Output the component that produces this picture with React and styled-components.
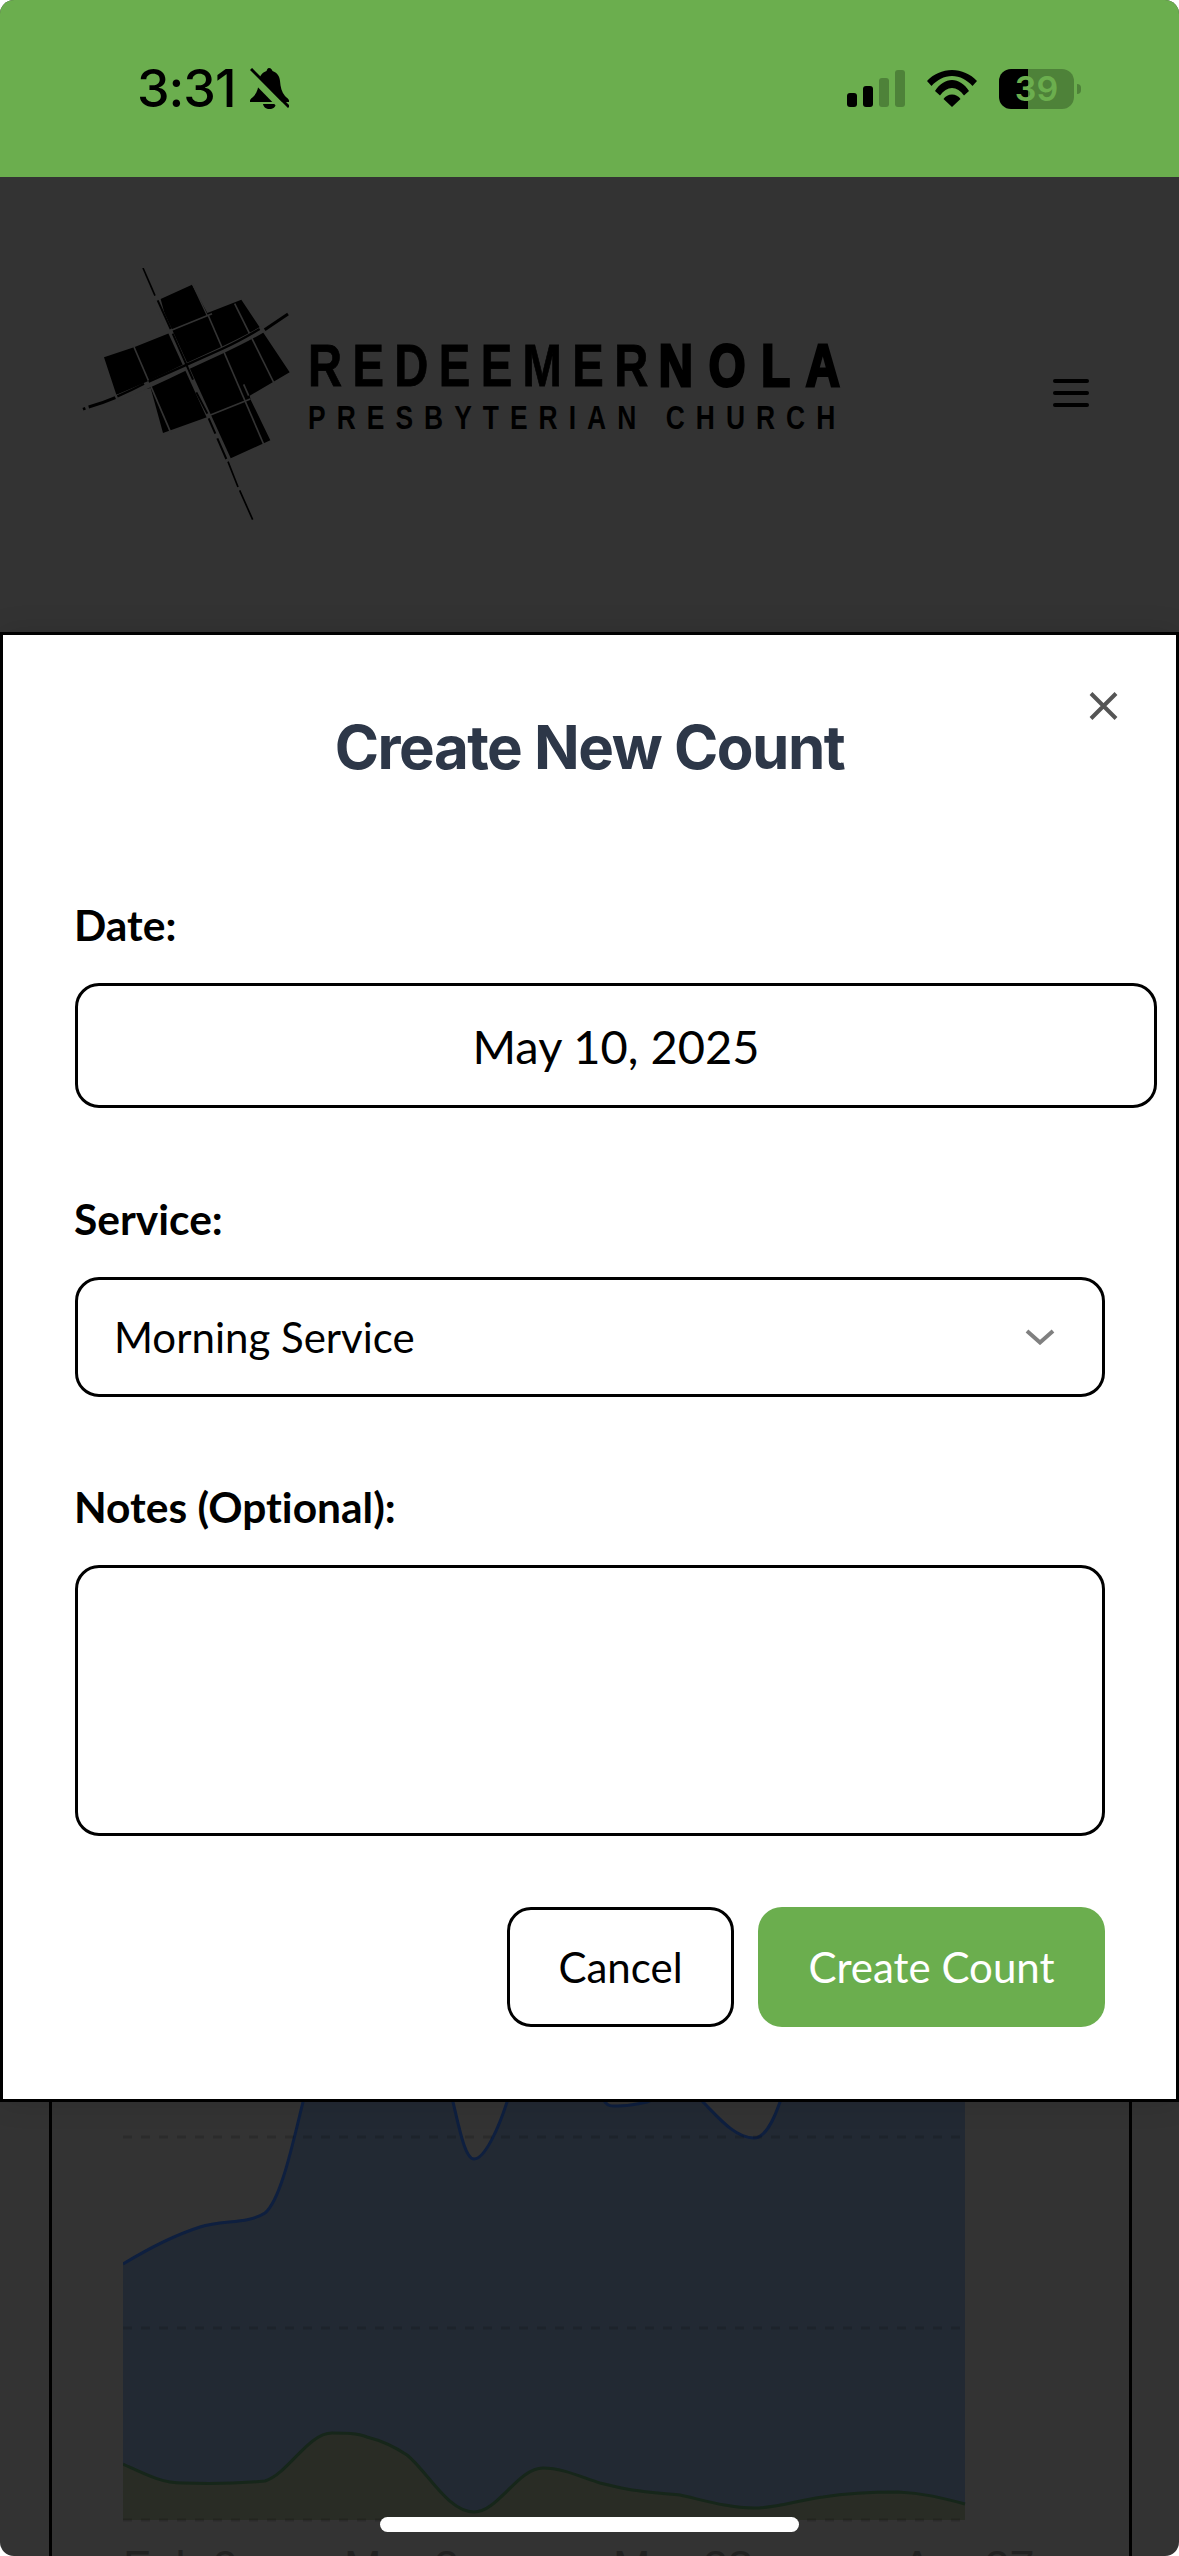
import React from "react";
import styled, { createGlobalStyle } from "styled-components";

const GREEN = "#6bae4e";
const DIM = "#4e8239";
const SHADE = "#333333";

const GlobalStyle = createGlobalStyle`
  html, body {
    margin: 0;
    padding: 0;
    background: #fff;
  }
  * {
    box-sizing: border-box;
  }
`;

const BellIcon = () => (
  <svg width="39" height="42" viewBox="0 0 39 42">
    <path
      d="M19 0c2 0 3 1.500 3.500 3C27 4.500 29.500 8 30 13c.5 6 1.500 11 5 15 1.500 1.500 4 3 4 4.500V34H0v-1.500C0 31 2.500 29.500 4 28c3.500-4 4.500-9 5-15 .5-5 3-8.500 7.500-10C17 1.500 17.500 0 19 0z"
      fill="#000"
    />
    <path d="M13 36h13c-.5 3-3 5-6.500 5S13.500 39 13 36z" fill="#000" />
    <path d="M-2 4 L36 43" stroke={GREEN} strokeWidth="7" />
    <path d="M1 1 L39 39" stroke="#000" strokeWidth="3" />
  </svg>
);

const WifiIcon = () => (
  <svg width="50" height="37" viewBox="0 0 50 37">
    <path d="M0 11C6.500 4 15.500 0 25 0s18.500 4 25 11l-4.500 5C40 10 33 6 25 6S10 10 4.500 16z" fill="#000" />
    <path d="M8 21c4.500-7 10.500-11 17-11s12.500 4 17 11l-5 4.500C33.500 20.500 29.500 18 25 18s-8.500 2.500-12 7.500z" fill="#000" />
    <path d="M16.500 29c2-3 5-4.500 8.500-4.500s6.500 1.500 8.500 4.500L25 37z" fill="#000" />
  </svg>
);

const LogoMark = () => (
  <MarkSvg viewBox="22 25 624 756">
    <path
      d="M258 118 L352 75 L398 160 L500 120 L645 338 L525 408 L528 420 L587 542 L465 597 L405 470 L265 520 L228 385 L125 405 L88 293 L180 262 L285 220 Z"
      fill="#000"
    />
    <g stroke={SHADE} fill="none" strokeWidth="5">
      <path d="M353 72 L398 168" strokeWidth="4" />
      <path d="M400 166 L568 556" />
      <path d="M178 262 L288 518" />
      <path d="M480 132 L598 370" />
      <path d="M507 374 L522 408" />
      <path d="M290 212 L412 162" />
      <path d="M398 470 L527 418" />
      <path d="M244 122 L462 600" strokeWidth="15" />
      <path d="M120 418 Q 215 380 333 322 L445 270 Q 520 235 572 204" strokeWidth="20" />
    </g>
    <g stroke="#000" fill="none">
      <path d="M205 25 L241 108" strokeWidth="5" />
      <path d="M249 122 L288 208" strokeWidth="6" />
      <path d="M294 222 L355 360 M365 398 L398 462 M402 476 L422 522 M428 536 L455 598" strokeWidth="6" />
      <path d="M460 606 L490 682 M495 692 L534 780" strokeWidth="5" />
      <path d="M25 449 L32 446" strokeWidth="8" />
      <path d="M42 442 Q 85 430 122 414" strokeWidth="9" />
      <path d="M128 410 Q 170 392 208 372 M222 366 L330 318 L442 268 Q 495 244 555 208" strokeWidth="7" />
      <path d="M570 210 L640 163" strokeWidth="9" />
    </g>
  </MarkSvg>
);

const AttendanceChart = () => (
  <ChartSvg viewBox="0 0 1000 454">
    <path
      d="M0 162 C28 145 52 133 77 125 C100 118 125 122 142 111 C158 98 170 40 180 0 L190 -60 L318 -60 L330 0 C336 25 342 57 351 57 C362 57 376 25 384 0 L395 -40 L470 -40 L482 0 C486 5 490 4 494 4 C504 4 515 2 524 0 L570 -20 L580 0 C595 15 612 36 631 36 C642 36 650 20 657 0 L670 -50 L842 -50 L842 418 L0 418 Z"
      fill="#222933"
    />
    <path
      d="M0 162 C28 145 52 133 77 125 C100 118 125 122 142 111 C158 98 170 40 180 0 L190 -60 M318 -60 L330 0 C336 25 342 57 351 57 C362 57 376 25 384 0 L395 -40 M470 -40 L482 0 C486 5 490 4 494 4 C504 4 515 2 524 0 L570 -20 L580 0 C595 15 612 36 631 36 C642 36 650 20 657 0 L670 -50"
      fill="none"
      stroke="#0e1f3f"
      strokeWidth="3"
    />
    <path
      d="M0 362 C22 372 38 381 60 381 C88 382 120 381 142 379 C165 372 185 331 209 331 C222 331 234 331 244 335 C260 339 272 345 284 353 C305 370 325 410 351 410 C375 410 395 366 420 366 C440 366 460 376 477 381 L494 385 C515 390 535 391 557 393 C580 398 605 406 631 406 C655 406 675 398 700 395 C725 391 750 390 775 390 C800 391 820 396 842 402 L842 418 L0 418 Z"
      fill="#292c25"
    />
    <path
      d="M0 362 C22 372 38 381 60 381 C88 382 120 381 142 379 C165 372 185 331 209 331 C222 331 234 331 244 335 C260 339 272 345 284 353 C305 370 325 410 351 410 C375 410 395 366 420 366 C440 366 460 376 477 381 L494 385 C515 390 535 391 557 393 C580 398 605 406 631 406 C655 406 675 398 700 395 C725 391 750 390 775 390 C800 391 820 396 842 402"
      fill="none"
      stroke="#16261a"
      strokeWidth="3"
    />
    <g stroke="rgba(0,0,0,0.14)" strokeWidth="3" strokeDasharray="9 9">
      <path d="M0 35 H842" />
      <path d="M0 226 H842" />
      <path d="M0 418 H842" />
    </g>
    <AxisText x="0" y="480">Feb 9</AxisText>
    <AxisText x="221" y="480">Mar 2</AxisText>
    <AxisText x="490" y="480">Mar 23</AxisText>
    <AxisText x="779" y="480">Apr 27</AxisText>
  </ChartSvg>
);

export default function App() {
  return (
    <>
      <GlobalStyle />
      <Page>
        <StatusBar>
          <TimeGroup>
            <Clock>3:31</Clock>
            <BellIcon />
          </TimeGroup>
          <StatusIcons>
            <SignalBars>
              <Bar $h={14} />
              <Bar $h={21} />
              <Bar $h={29} $dim />
              <Bar $h={37} $dim />
            </SignalBars>
            <WifiIcon />
            <Battery>39</Battery>
          </StatusIcons>
        </StatusBar>

        <Header>
          <Logo>
            <LogoMark />
            <LogoText>
              <LogoName>
                REDEEMER<strong>NOLA</strong>
              </LogoName>
              <LogoSub>PRESBYTERIAN CHURCH</LogoSub>
            </LogoText>
          </Logo>
          <Burger>
            <span />
            <span />
            <span />
          </Burger>
        </Header>

        <Modal>
          <CloseButton aria-label="Close">
            <svg width="29" height="28" viewBox="0 0 29 28">
              <path d="M2 1.500 L27 26.500 M27 1.500 L2 26.500" stroke="#555" strokeWidth="4" />
            </svg>
          </CloseButton>
          <Title>Create New Count</Title>
          <Form>
            <Label>Date:</Label>
            <DateField>May 10, 2025</DateField>
            <Label $gap={87}>Service:</Label>
            <SelectField>
              Morning Service
              <svg width="30" height="16" viewBox="0 0 30 16">
                <path d="M2 2 L15 13.500 L28 2" fill="none" stroke="#808080" strokeWidth="4" />
              </svg>
            </SelectField>
            <Label $gap={86}>Notes (Optional):</Label>
            <NotesField />
            <Actions>
              <CancelButton>Cancel</CancelButton>
              <SubmitButton>Create Count</SubmitButton>
            </Actions>
          </Form>
        </Modal>

        <ChartCard>
          <AttendanceChart />
        </ChartCard>

        <HomeIndicator />
      </Page>
    </>
  );
}

const Page = styled.div`
  position: relative;
  width: 1179px;
  height: 2556px;
  overflow: hidden;
  background: ${SHADE};
  border-radius: 14px;
  display: flex;
  flex-direction: column;
`;

const StatusBar = styled.div`
  height: 177px;
  flex: none;
  background: ${GREEN};
  display: flex;
  align-items: center;
  justify-content: space-between;
  padding: 0 98px 0 137px;
`;

const TimeGroup = styled.div`
  display: flex;
  align-items: center;
  gap: 14px;
`;

const Clock = styled.div`
  font-family: Inter, "Liberation Sans", sans-serif;
  font-size: 52px;
  font-weight: 500;
  line-height: 52px;
  letter-spacing: -1px;
  color: #000;
`;

const StatusIcons = styled.div`
  display: flex;
  align-items: center;
  gap: 22px;
`;

const SignalBars = styled.div`
  display: flex;
  align-items: flex-end;
  gap: 6px;
  height: 37px;
`;

const Bar = styled.div`
  width: 10px;
  height: ${(p) => p.$h}px;
  border-radius: 3px;
  background: ${(p) => (p.$dim ? DIM : "#000")};
`;

const Battery = styled.div`
  position: relative;
  width: 75px;
  height: 40px;
  margin-right: 7px;
  border-radius: 12px;
  background: linear-gradient(90deg, #000 29px, ${DIM} 29px);
  color: ${GREEN};
  font-family: Inter, "Liberation Sans", sans-serif;
  font-size: 34px;
  font-weight: 600;
  line-height: 40px;
  text-align: center;

  &::after {
    content: "";
    position: absolute;
    top: 15px;
    right: -7px;
    width: 4px;
    height: 10px;
    border-radius: 0 5px 5px 0;
    background: ${DIM};
  }
`;

const Header = styled.div`
  height: 455px;
  flex: none;
  display: flex;
  justify-content: space-between;
  align-items: flex-start;
  padding: 0 90px 0 82px;
`;

const Logo = styled.div`
  display: flex;
  align-items: flex-start;
  gap: 18px;
  margin-top: 91px;
`;

const MarkSvg = styled.svg`
  width: 208px;
  height: 252px;
  flex: none;
`;

const LogoText = styled.div`
  width: 532px;
  margin-top: 68px;
  font-family: "Liberation Sans", sans-serif;
  font-weight: 700;
  color: #000;
  white-space: nowrap;
  transform: scaleX(0.8);
  transform-origin: left top;
`;

const LogoName = styled.div`
  font-size: 59px;
  line-height: 60px;
  letter-spacing: 13px;
  -webkit-text-stroke: 0.8px #000;

  strong {
    letter-spacing: 19.8px;
    -webkit-text-stroke: 3px #000;
  }
`;

const LogoSub = styled.div`
  margin-top: 4px;
  font-size: 33px;
  line-height: 36px;
  letter-spacing: 13.8px;
`;

const Burger = styled.div`
  width: 36px;
  height: 28px;
  margin-top: 202px;
  display: flex;
  flex-direction: column;
  justify-content: space-between;

  span {
    height: 4px;
    border-radius: 2px;
    background: #000;
  }
`;

const Modal = styled.div`
  position: relative;
  height: 1470px;
  flex: none;
  background: #fff;
  border: 3px solid #000;
  box-shadow: 0 0 28px rgba(0, 0, 0, 0.12);
  padding: 78px 0 0 72px;
`;

const CloseButton = styled.button`
  position: absolute;
  top: 57px;
  right: 58px;
  padding: 0;
  border: 0;
  background: none;
  display: flex;
`;

const Title = styled.h2`
  margin: 0 0 0 -72px;
  font-family: Inter, "Liberation Sans", sans-serif;
  font-size: 60px;
  line-height: 68px;
  font-weight: 700;
  letter-spacing: -1.5px;
  text-align: center;
  color: #2d3748;
`;

const Form = styled.div`
  width: 1030px;
  margin-top: 120px;
  font-family: Lato, "Liberation Sans", sans-serif;
  font-variant-ligatures: none;
  color: #000;
`;

const Label = styled.div`
  margin-top: ${(p) => p.$gap || 0}px;
  margin-bottom: 34px;
  margin-left: -1px;
  font-size: 42.5px;
  line-height: 48px;
  font-weight: 700;
`;

const DateField = styled.div`
  width: 1082px;
  height: 125px;
  border: 3px solid #000;
  border-radius: 24px;
  display: flex;
  align-items: center;
  justify-content: center;
  font-size: 47px;
`;

const SelectField = styled.div`
  height: 120px;
  border: 3px solid #000;
  border-radius: 24px;
  display: flex;
  align-items: center;
  justify-content: space-between;
  padding: 0 47px 0 36px;
  font-size: 42px;
`;

const NotesField = styled.textarea`
  display: block;
  width: 100%;
  height: 271px;
  border: 3px solid #000;
  border-radius: 24px;
  background: #fff;
  resize: none;
`;

const Actions = styled.div`
  display: flex;
  justify-content: flex-end;
  gap: 24px;
  margin-top: 71px;
`;

const CancelButton = styled.button`
  width: 227px;
  height: 120px;
  border: 3px solid #000;
  border-radius: 24px;
  background: #fff;
  color: #000;
  font-family: inherit;
  font-size: 42px;
`;

const SubmitButton = styled.button`
  width: 347px;
  height: 120px;
  border: 0;
  border-radius: 24px;
  background: ${GREEN};
  color: #fff;
  font-family: inherit;
  font-size: 42px;
`;

const ChartCard = styled.div`
  flex: 1;
  margin: 0 47px 0 49px;
  border-left: 3px solid #000;
  border-right: 3px solid #000;
  padding-left: 71px;
  overflow: hidden;
`;

const ChartSvg = styled.svg`
  display: block;
  width: 1000px;
  height: 454px;
`;

const AxisText = styled.text`
  font-family: "Liberation Sans", sans-serif;
  font-size: 45px;
  fill: #222;
`;

const HomeIndicator = styled.div`
  position: absolute;
  left: 380px;
  top: 2517px;
  width: 419px;
  height: 15px;
  border-radius: 8px;
  background: #fff;
`;
